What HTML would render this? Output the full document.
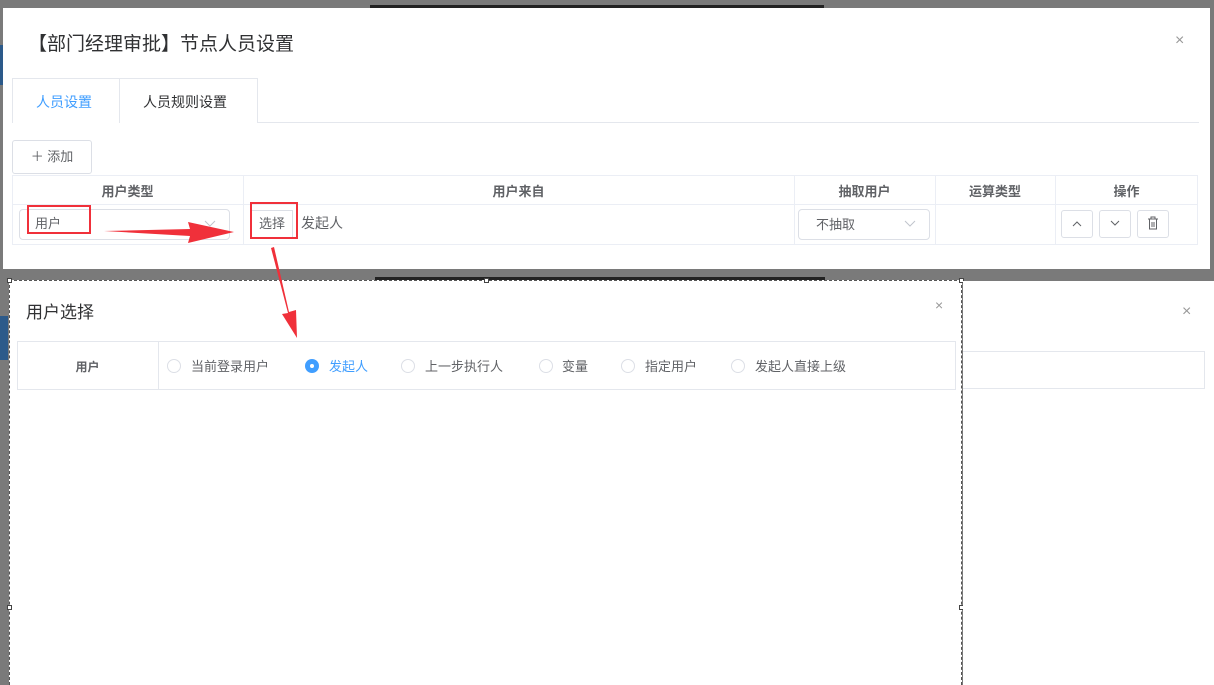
<!DOCTYPE html>
<html style="overflow:hidden;height:685px"><head><meta charset="utf-8">
<style>
*{box-sizing:border-box;margin:0;padding:0}
body{width:1214px;height:685px;overflow:hidden;background:#7a7a7a;position:relative;font-family:"Liberation Sans","Noto Sans CJK SC",sans-serif;color:#606266}
.abs{position:absolute}
.t{font-size:13px}
</style></head><body>
<div class="abs" style="left:370px;top:5px;width:454px;height:3px;background:#222"></div>
<div class="abs" style="left:0;top:45px;width:8px;height:40px;background:#2c5a8a"></div>
<div class="abs" style="left:0;top:316px;width:8px;height:44px;background:#2c5a8a"></div>
<div class="abs" style="left:375px;top:277px;width:450px;height:3px;background:#222"></div>

<div class="abs" style="left:3px;top:8px;width:1207px;height:261px;background:#fff">
  <div class="abs" style="left:25px;top:21px;font-size:19px;color:#303133">【部门经理审批】节点人员设置</div>
  <div class="abs" style="left:1172px;top:24px;font-size:16px;color:#999">×</div>
  <div class="abs" style="left:9px;top:114px;width:1187px;height:1px;background:#e4e7ed"></div>
  <div class="abs" style="left:9px;top:70px;width:246px;height:45px;border:1px solid #e4e7ed;border-bottom:none;background:#fff"></div>
  <div class="abs" style="left:116px;top:70px;width:1px;height:45px;background:#e4e7ed"></div>
  <div class="abs" style="left:10px;top:114px;width:106px;height:2px;background:#fff"></div>
  <div class="abs" style="left:33px;top:84px;font-size:14px;color:#409eff">人员设置</div>
  <div class="abs" style="left:140px;top:84px;font-size:14px;color:#303133">人员规则设置</div>
  <div class="abs t" style="left:9px;top:132px;width:80px;height:34px;border:1px solid #dcdfe6;border-radius:3px;line-height:32px;text-align:center;color:#606266">＋ 添加</div>
  <div class="abs" style="left:9px;top:167px;width:1186px;height:70px;border:1px solid #ebeef5"></div>
  <div class="abs" style="left:9px;top:196px;width:1186px;height:1px;background:#ebeef5"></div>
  <div class="abs" style="left:240px;top:167px;width:1px;height:70px;background:#ebeef5"></div>
  <div class="abs" style="left:791px;top:167px;width:1px;height:70px;background:#ebeef5"></div>
  <div class="abs" style="left:932px;top:167px;width:1px;height:70px;background:#ebeef5"></div>
  <div class="abs" style="left:1052px;top:167px;width:1px;height:70px;background:#ebeef5"></div>
  <div class="abs t" style="left:9px;top:173px;width:231px;text-align:center;font-weight:bold;color:#606266">用户类型</div>
  <div class="abs t" style="left:240px;top:173px;width:551px;text-align:center;font-weight:bold">用户来自</div>
  <div class="abs t" style="left:791px;top:173px;width:141px;text-align:center;font-weight:bold">抽取用户</div>
  <div class="abs t" style="left:932px;top:173px;width:120px;text-align:center;font-weight:bold">运算类型</div>
  <div class="abs t" style="left:1052px;top:173px;width:143px;text-align:center;font-weight:bold">操作</div>
  <div class="abs" style="left:16px;top:201px;width:211px;height:31px;border:1px solid #dcdfe6;border-radius:4px"></div>
  <div class="abs t" style="left:32px;top:205px">用户</div>
  <svg class="abs" style="left:201px;top:212px" width="12" height="8"><path d="M1 1 L6 6 L11 1" fill="none" stroke="#c0c4cc" stroke-width="1"/></svg>
  <div class="abs t" style="left:248px;top:202px;width:42px;height:28px;border:1px solid #dcdfe6;line-height:26px;text-align:center">选择</div>
  <div class="abs" style="left:298px;top:205px;font-size:14px">发起人</div>
  <div class="abs" style="left:795px;top:201px;width:132px;height:31px;border:1px solid #dcdfe6;border-radius:4px"></div>
  <div class="abs t" style="left:813px;top:206px">不抽取</div>
  <svg class="abs" style="left:901px;top:212px" width="12" height="8"><path d="M1 1 L6 6 L11 1" fill="none" stroke="#c0c4cc" stroke-width="1"/></svg>
  <div class="abs" style="left:1058px;top:202px;width:32px;height:28px;border:1px solid #dcdfe6;border-radius:3px"></div>
  <svg class="abs" style="left:1069px;top:212px" width="10" height="7"><path d="M1 6 L5 2 L9 6" fill="none" stroke="#606266" stroke-width="1"/></svg>
  <div class="abs" style="left:1096px;top:202px;width:32px;height:28px;border:1px solid #dcdfe6;border-radius:3px"></div>
  <svg class="abs" style="left:1107px;top:212px" width="10" height="7"><path d="M1 1 L5 5 L9 1" fill="none" stroke="#606266" stroke-width="1"/></svg>
  <div class="abs" style="left:1134px;top:202px;width:32px;height:28px;border:1px solid #dcdfe6;border-radius:3px"></div>
  <svg class="abs" style="left:1144px;top:208px" width="12" height="14"><path d="M1 3 H11 M4 3 V1 H8 V3 M2.5 3 V13 H9.5 V3 M5 6 V11 M7 6 V11" fill="none" stroke="#606266" stroke-width="1"/></svg>
</div>
<div class="abs" style="left:27px;top:205px;width:64px;height:29px;border:2px solid #f0303a"></div>
<div class="abs" style="left:250px;top:202px;width:48px;height:37px;border:2px solid #f0303a"></div>

<div class="abs" style="left:9px;top:280px;width:953px;height:405px;background:#fff;border:1px dashed #555;border-bottom:none"></div>
<div class="abs" style="left:7px;top:278px;width:5px;height:5px;border:1px solid #444;background:#fff"></div>
<div class="abs" style="left:484px;top:278px;width:5px;height:5px;border:1px solid #444;background:#fff"></div>
<div class="abs" style="left:959px;top:278px;width:5px;height:5px;border:1px solid #444;background:#fff"></div>
<div class="abs" style="left:7px;top:605px;width:5px;height:5px;border:1px solid #444;background:#fff"></div>
<div class="abs" style="left:959px;top:605px;width:5px;height:5px;border:1px solid #444;background:#fff"></div>
<div class="abs" style="left:26px;top:298px;font-size:17px;color:#303133">用户选择</div>
<div class="abs" style="left:935px;top:297px;font-size:14px;color:#999">×</div>
<div class="abs" style="left:17px;top:341px;width:939px;height:49px;border:1px solid #e4e7ed"></div>
<div class="abs" style="left:158px;top:341px;width:1px;height:49px;background:#e4e7ed"></div>
<div class="abs t" style="left:17px;top:358px;width:141px;text-align:center;font-weight:bold;font-size:12px">用户</div>
<div class="abs" style="left:167px;top:359px;width:14px;height:14px;border:1px solid #dcdfe6;border-radius:50%"></div>
<div class="abs t" style="left:191px;top:356px">当前登录用户</div>
<div class="abs" style="left:305px;top:359px;width:14px;height:14px;background:#409eff;border-radius:50%"></div>
<div class="abs" style="left:310px;top:364px;width:4px;height:4px;background:#fff;border-radius:50%"></div>
<div class="abs t" style="left:329px;top:356px;color:#409eff">发起人</div>
<div class="abs" style="left:401px;top:359px;width:14px;height:14px;border:1px solid #dcdfe6;border-radius:50%"></div>
<div class="abs t" style="left:425px;top:356px">上一步执行人</div>
<div class="abs" style="left:539px;top:359px;width:14px;height:14px;border:1px solid #dcdfe6;border-radius:50%"></div>
<div class="abs t" style="left:562px;top:356px">变量</div>
<div class="abs" style="left:621px;top:359px;width:14px;height:14px;border:1px solid #dcdfe6;border-radius:50%"></div>
<div class="abs t" style="left:645px;top:356px">指定用户</div>
<div class="abs" style="left:731px;top:359px;width:14px;height:14px;border:1px solid #dcdfe6;border-radius:50%"></div>
<div class="abs t" style="left:755px;top:356px">发起人直接上级</div>

<div class="abs" style="left:963px;top:281px;width:251px;height:404px;background:#fff"></div>
<div class="abs" style="left:963px;top:351px;width:242px;height:38px;border:1px solid #e4e7ed;border-left:none"></div>
<div class="abs" style="left:1182px;top:303px;font-size:16px;color:#999">×</div>

<svg class="abs" style="left:0;top:0" width="1214" height="685">
  <polygon points="104,231 190,229 188,222 234,232 188,243 190,236" fill="#f0303a"/>
  <polygon points="271,248 274,247 289,312 296,310 297,338 282,314 288,313" fill="#f0303a"/>
</svg>
</body></html>
